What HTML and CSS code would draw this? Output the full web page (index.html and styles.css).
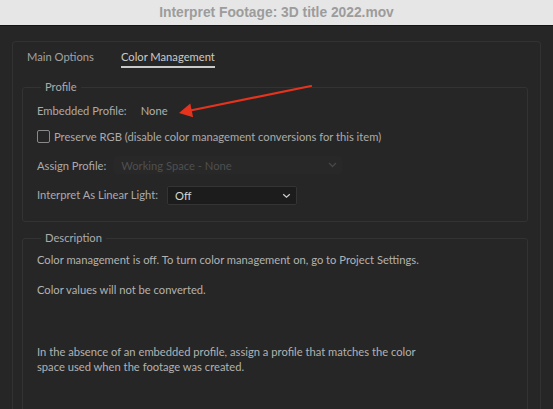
FILE: index.html
```html
<!DOCTYPE html>
<html>
<head>
<meta charset="utf-8">
<link rel="stylesheet" href="styles.css">
</head>
<body>
<div class="titlebar">Interpret Footage: 3D title 2022.mov</div>
<div class="dialog">
  <div class="tabs">
    <span class="tab">Main Options</span>
    <span class="tab active">Color Management</span>
  </div>
  <fieldset class="group profile">
    <legend>Profile</legend>
    <div class="row first">
      <span class="label">Embedded Profile:</span>
      <span class="value">None</span>
    </div>
    <div class="row check-row">
      <span class="checkbox"></span>
      <span class="label">Preserve RGB (disable color management conversions for this item)</span>
    </div>
    <div class="row">
      <span class="label">Assign Profile:</span>
      <span class="select disabled"><span class="select-text">Working Space - None</span><svg class="chev" width="9" height="6" viewBox="0 0 9 6"><path d="M1 1 L4.5 4.5 L8 1" fill="none" stroke="#474747" stroke-width="1.3"/></svg></span>
    </div>
    <div class="row last">
      <span class="label">Interpret As Linear Light:</span>
      <span class="select active"><span class="select-text">Off</span><svg class="chev" width="9" height="6" viewBox="0 0 9 6"><path d="M1.2 1.2 L4.5 4.3 L7.8 1.2" fill="none" stroke="#cfcfcf" stroke-width="1.2"/></svg></span>
    </div>
  </fieldset>
  <fieldset class="group description">
    <legend>Description</legend>
    <p>Color management is off. To turn color management on, go to Project Settings.</p>
    <p>Color values will not be converted.</p>
    <p class="gap">In the absence of an embedded profile, assign a profile that matches the color<br>space used when the footage was created.</p>
  </fieldset>
</div>
<svg class="arrow" width="553" height="409" viewBox="0 0 553 409">
  <line x1="311" y1="86" x2="188" y2="111" stroke="#e5331d" stroke-width="2.2" stroke-linecap="round"/>
  <polygon points="179,113 190.3,103.5 193.1,117.3" fill="#e5331d"/>
</svg>
</body>
</html>
```
FILE: styles.css
```css
html, body {
  margin: 0;
  padding: 0;
}
body {
  width: 553px;
  height: 409px;
  overflow: hidden;
  background: #262626;
  font-family: Lato, "Noto Sans", sans-serif;
  font-size: 11.2px;
  color: #ababab;
  position: relative;
}
.titlebar {
  height: 25px;
  line-height: 25px;
  background: #e6e6e6;
  border-bottom: 1px solid #141414;
  text-align: center;
  font-family: "Liberation Sans", Arial, sans-serif;
  font-weight: bold;
  font-size: 13.8px;
  color: #9c9c9c;
}
.dialog {
  margin: 15px 12px 0;
  border: 1px solid #323232;
  border-bottom: none;
  border-radius: 4px 4px 0 0;
  height: 368px;
  box-sizing: border-box;
  padding: 0 12px 0 9px;
  overflow: hidden;
}
.tabs {
  display: flex;
  gap: 27px;
  padding: 7px 0 0 5px;
  height: 27px;
  box-sizing: border-box;
}
.tab {
  line-height: 15px;
  color: #a2a2a2;
  height: 17px;
}
.tab.active {
  color: #cacaca;
  border-bottom: 2px solid #c9c9c9;
}
.group {
  margin: 0;
  border: 1px solid #333333;
  border-radius: 3px;
  padding: 0 0 0 14px;
}
.group legend {
  padding: 0 4px;
  margin-left: 4px;
  color: #ababab;
  line-height: 14px;
}
.profile {
  margin-top: 11px;
  height: 142px;
  box-sizing: border-box;
  padding-top: 8px;
}
.row {
  display: flex;
  align-items: center;
  height: 28px;
}
.row.first {
  height: 17px;
}
.row.last {
  height: 31px;
}
.value {
  margin-left: 14px;
  color: #b0b0b0;
}
.check-row {
  height: 32px;
  padding-top: 2px;
  box-sizing: border-box;
}
.checkbox {
  width: 11px;
  height: 11px;
  border: 1.5px solid #8a8a8a;
  border-radius: 2px;
  margin-right: 4px;
}
.select {
  display: flex;
  align-items: center;
  justify-content: space-between;
  box-sizing: border-box;
  border-radius: 2px;
  padding: 0 5px 0 7px;
}
.select.disabled {
  width: 228px;
  height: 18px;
  margin-left: 8px;
  background: #282828;
  color: #4f4f4f;
}
.select.active {
  width: 130px;
  height: 19px;
  margin-left: 9px;
  margin-top: 2px;
  background: #1c1c1c;
  border: 1px solid #343434;
  color: #d6d6d6;
}
.description {
  margin-top: 9px;
  height: 200px;
  padding-top: 7px;
}
.description p {
  margin: 0 0 15px;
  line-height: 15px;
  color: #b2b2b2;
}
.description p.gap {
  margin-top: 47px;
}
.arrow {
  position: absolute;
  left: 0;
  top: 0;
  pointer-events: none;
}
```
